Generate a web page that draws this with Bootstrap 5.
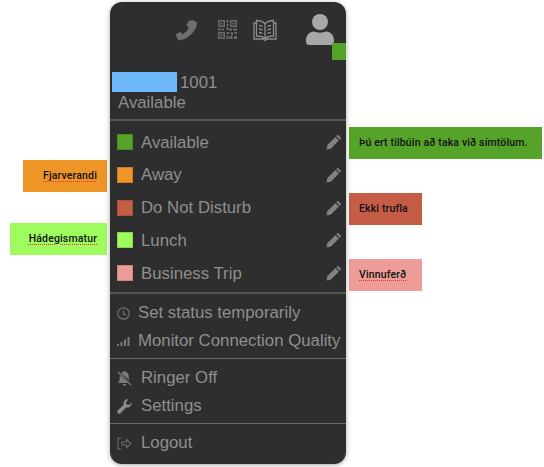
<!DOCTYPE html>
<html lang="en">
<head>
<meta charset="UTF-8">
<title>Status menu</title>
<link href="https://cdn.jsdelivr.net/npm/bootstrap@5.3.0/dist/css/bootstrap.min.css" rel="stylesheet">
<style>
body { background: #fff; }
.stage { position: relative; width: 544px; height: 467px; overflow: hidden; }
.phone-menu {
  position: absolute; left: 110px; top: 2px; width: 236px; height: 462px;
  background: #2e2e2e; border-radius: 12px; color: #8f8f8f;
  font-family: "Liberation Sans", Arial, sans-serif; font-size: 16.8px;
  box-shadow: 0 1px 5px rgba(0,0,0,.35);
}
.top-icons { height: 43px; padding: 12px 12px 0 0; }
.status-dot { position: absolute; right: 0; top: 41px; width: 14px; height: 17px; background: #55a329; }
.identity { height: 76px; padding-top: 27px; line-height: 20px; border-bottom: 2px solid #555; }
.ext-row { height: 20px; line-height: 22px; }
.ext-mask { display: inline-block; width: 65px; height: 20px; margin: 0 3px 0 2px; background: #6cb8f8; vertical-align: top; }
.state-text { padding: 1px 0 0 8px; }
.state-list { height: 173px; padding: 5px 0; border-bottom: 2px solid #555; }
.state-row { height: 32.7px; padding: 0 4px 0 7px; }
.swatch { width: 16px; height: 16px; margin-right: 8px; border: 1px solid rgba(0,0,0,.15); }
.edit-ic { margin-left: auto; }
.menu-group { border-bottom: 1px solid #686868; padding: 4px 0; }
.menu-line { height: 28px; padding: 2px 0 0 7px; white-space: nowrap; }
.ic-slot { width: 21px; flex: none; }
.ic-slot-wide { width: 24px; flex: none; }
.side-note {
  position: absolute; height: 32px; padding: 0 10px; display: flex; align-items: center;
  font-family: Roboto, sans-serif; font-size: 10.5px; font-weight: 500; letter-spacing: .15px; color: #111; white-space: nowrap;
}
.spell { text-decoration: underline dotted #f0302a 1px; text-underline-offset: 2px; }
</style>
</head>
<body>
<div class="stage">
  <div class="side-note justify-content-end" style="left:23px;top:160px;width:84px;background:#ee9527"><span class="spell">Fjarverandi</span></div>
  <div class="side-note justify-content-end" style="left:10px;top:223px;width:97px;background:#9efc5f"><span class="spell">Hádegismatur</span></div>
  <div class="side-note" style="left:349px;top:127px;width:193px;background:#55a329">Þú ert tilbúin að taka við símtölum.</div>
  <div class="side-note" style="left:349px;top:193px;width:73px;background:#c55c45">Ekki trufla</div>
  <div class="side-note" style="left:349px;top:259px;width:73px;background:#ee9c98"><span class="spell">Vinnuferð</span></div>

  <div class="phone-menu">
    <div class="top-icons d-flex justify-content-end align-items-center">
      <svg class="me-3" width="22" height="22" viewBox="0 0 24 24" fill="#6e6e6e"><path d="M18 1l4 2c1 .5 1 1.500.8 3C21 14 14 21 5 23c-1.500.3-2.500 0-3-1l-2-4c-.3-.7 0-1.300.7-1.700l3.500-1.800c.6-.3 1.200-.2 1.600.3l1.500 1.700c3-1.500 5.500-4.500 6.700-7.500l-2-1.500c-.5-.4-.6-1-.3-1.600l2-3.500c.4-.7 1-1 2.300-.4z"/></svg>
      <svg class="ms-1 me-3" width="19" height="19" viewBox="0 0 19 19" fill="#6a6a6a"><path d="M0 0h7v7H0zM1.500 1.500v4h4v-4zM12 0h7v7h-7zM13.500 1.500v4h4v-4zM0 12h7v7H0zM1.500 13.500v4h4v-4zM2.500 2.500h2v2h-2zM14.500 2.500h2v2h-2zM2.500 14.500h2v2h-2zM8.500 0h2v3h-2zM8.500 4h2v2h-2zM8.500 7h2v3h-2zM0 8.500h3v2H0zM4 8.500h2v2H4zM11 8.500h3v2h-3zM15 8.500h4v2h-4zM8.500 12h3v2h-3zM13 12h2v3h-2zM16.500 12H19v2h-2.500zM8.500 15.500h2V19h-2zM11.500 16h3v3h-3zM16 16h3v3h-3z"/></svg>
      <svg style="margin-right:29px" width="24" height="22" viewBox="0 0 24 22" fill="none" stroke="#8c8c8c" stroke-width="1.300"><path d="M12 5C10 2.500 7 1.500 3.500 1.500V17c3.500 0 6.500.8 8.500 2.500 2-1.700 5-2.500 8.500-2.500V1.500C17 1.500 14 2.500 12 5zM12 5v14.500M3.500 4H1v16h9l2 1.500 2-1.500h9V4h-2.500M6 6.500c1.500 0 2.500.4 3.500 1M6 10c1.500 0 2.500.4 3.500 1M6 13.500c1.500 0 2.500.4 3.500 1M18 6.500c-1.500 0-2.500.4-3.500 1M18 10c-1.500 0-2.500.4-3.500 1M18 13.500c-1.500 0-2.500.4-3.500 1"/></svg>
      <svg width="28" height="31" viewBox="0 0 28 31" fill="#a8a8a8"><circle cx="14" cy="8" r="8"/><path d="M0 27c0-6 3-9 8-9.500 3.500 1.500 8.500 1.500 12 0 5 .5 8 3.500 8 9.500 0 2.500-1 4-3 4H3c-2 0-3-1.500-3-4z"/></svg>
    </div>
    <span class="status-dot"></span>
    <div class="identity">
      <div class="ext-row"><span class="ext-mask"></span>1001</div>
      <div class="state-text">Available</div>
    </div>
    <div class="state-list">
      <div class="state-row d-flex align-items-center"><span class="swatch" style="background:#55a329"></span>Available<svg class="edit-ic" width="16" height="16" viewBox="0 0 17 17" fill="#828282"><path d="M12.500.8l3.700 3.700-1.600 1.600-3.700-3.700zM10 3.300l3.700 3.700-8.700 8.700L.6 16.400l.7-4.400z"/></svg></div>
      <div class="state-row d-flex align-items-center"><span class="swatch" style="background:#ee9527"></span>Away<svg class="edit-ic" width="16" height="16" viewBox="0 0 17 17" fill="#828282"><path d="M12.500.8l3.700 3.700-1.600 1.600-3.700-3.700zM10 3.300l3.700 3.700-8.700 8.700L.6 16.400l.7-4.400z"/></svg></div>
      <div class="state-row d-flex align-items-center"><span class="swatch" style="background:#c55c45"></span>Do Not Disturb<svg class="edit-ic" width="16" height="16" viewBox="0 0 17 17" fill="#828282"><path d="M12.500.8l3.700 3.700-1.600 1.600-3.700-3.700zM10 3.300l3.700 3.700-8.700 8.700L.6 16.400l.7-4.400z"/></svg></div>
      <div class="state-row d-flex align-items-center"><span class="swatch" style="background:#9efc5f"></span>Lunch<svg class="edit-ic" width="16" height="16" viewBox="0 0 17 17" fill="#828282"><path d="M12.500.8l3.700 3.700-1.600 1.600-3.700-3.700zM10 3.300l3.700 3.700-8.700 8.700L.6 16.400l.7-4.400z"/></svg></div>
      <div class="state-row d-flex align-items-center"><span class="swatch" style="background:#ee9c98"></span>Business Trip<svg class="edit-ic" width="16" height="16" viewBox="0 0 17 17" fill="#828282"><path d="M12.500.8l3.700 3.700-1.600 1.600-3.700-3.700zM10 3.300l3.700 3.700-8.700 8.700L.6 16.400l.7-4.400z"/></svg></div>
    </div>
    <div class="menu-group">
      <div class="menu-line d-flex align-items-center">
        <span class="ic-slot"><svg class="d-block" width="13" height="13" viewBox="0 0 13 13" fill="none" stroke="#6e6e6e" stroke-width="1.200"><circle cx="6.500" cy="6.500" r="5.700"/><path d="M6.500 3v3.800l2.500 1.400"/></svg></span>Set status temporarily
      </div>
      <div class="menu-line d-flex align-items-center">
        <span class="ic-slot"><svg class="d-block" width="13" height="10" viewBox="0 0 13 10" fill="#7a7a7a"><rect x="0" y="8" width="2" height="2"/><rect x="3.500" y="6" width="2" height="4"/><rect x="7" y="3.500" width="2" height="6.500"/><rect x="10.500" y="1" width="2" height="9"/></svg></span>Monitor Connection Quality
      </div>
    </div>
    <div class="menu-group">
      <div class="menu-line d-flex align-items-center">
        <span class="ic-slot-wide"><svg class="d-block" width="15" height="15" viewBox="0 0 15 15" fill="#7a7a7a"><path d="M4 2.200C5 1.200 6 .9 7 .8V0h1.200v.8c2.300.4 3.600 2.200 3.600 4.700 0 1.800.4 3 1.200 4.200zM2.800 4.300L11 12H1c1.300-1.400 1.800-3.200 1.800-5.500zM5.800 13h3.400c-.2 1.100-.9 1.800-1.700 1.800s-1.500-.7-1.700-1.800z"/><path d="M.8.800l13.400 13.400" stroke="#7a7a7a" stroke-width="1.300"/></svg></span>Ringer Off
      </div>
      <div class="menu-line d-flex align-items-center">
        <span class="ic-slot-wide"><svg class="d-block" width="15" height="15" viewBox="0 0 15 15" fill="#8c8c8c"><path d="M14.600 3.400c.5 2-.6 4.200-2.700 4.800-.9.300-1.700.2-2.500 0L3.500 14.200c-.8.800-2 .8-2.700 0-.8-.8-.8-2 0-2.700l6-5.900c-.3-.8-.3-1.700 0-2.500C7.400 1 9.400-.1 11.500.4L9 2.900l.5 2.600 2.600.5z"/></svg></span>Settings
      </div>
    </div>
    <div class="menu-group border-0">
      <div class="menu-line d-flex align-items-center">
        <span class="ic-slot-wide"><svg class="d-block" width="15" height="13" viewBox="0 0 15 13" fill="none" stroke="#6e6e6e" stroke-width="1.100"><path d="M4 1H1v11h3M5 5h4.500V2.500L14 6.500l-4.500 4V8H5z"/></svg></span>Logout
      </div>
    </div>
  </div>
</div>
<script src="https://cdn.jsdelivr.net/npm/bootstrap@5.3.0/dist/js/bootstrap.bundle.min.js"></script>
</body>
</html>
